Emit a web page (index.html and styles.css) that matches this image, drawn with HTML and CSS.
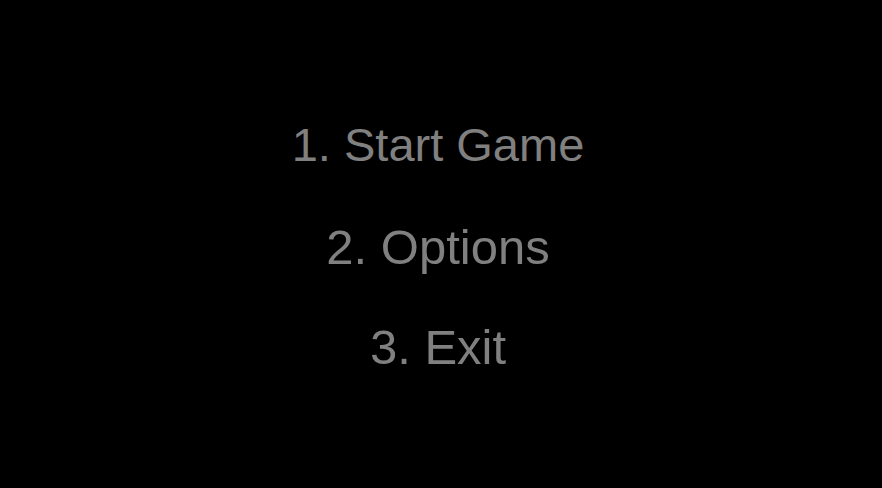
FILE: index.html
```html
<!DOCTYPE html>
<html>
<head>
<meta charset="utf-8">
<link rel="stylesheet" href="styles.css">
</head>
<body>
<main class="screen">
  <ul class="menu">
    <li class="item item-first">1. Start Game</li>
    <li class="item">2. Options</li>
    <li class="item">3. Exit</li>
  </ul>
</main>
</body>
</html>
```
FILE: styles.css
```css
html, body {
  margin: 0;
  padding: 0;
  background: #000;
  height: 100%;
}
.screen {
  height: 488px;
  display: flex;
  align-items: center;
  justify-content: center;
  padding-top: 4px;
  box-sizing: border-box;
}
.menu {
  list-style: none;
  margin: 0;
  padding: 0;
  display: flex;
  flex-direction: column;
  align-items: center;
}
.item {
  font-family: "Liberation Sans", Arial, sans-serif;
  font-size: 49px;
  line-height: 100px;
  color: #808080;
  margin-right: 6px;
}
.item-first {
  font-size: 47px;
  margin-bottom: 2px;
}
```
